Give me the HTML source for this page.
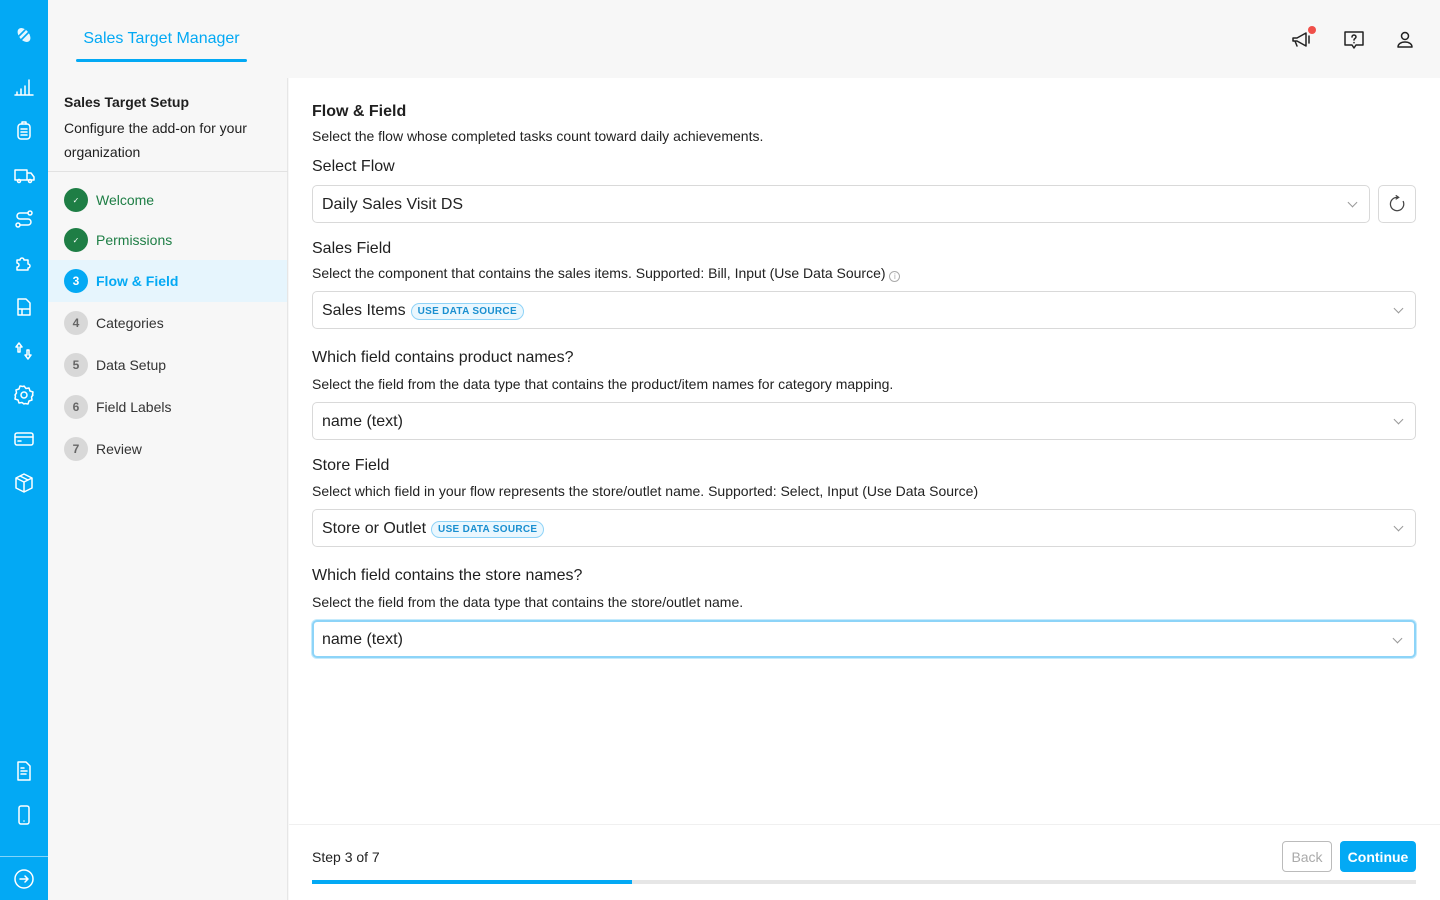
<!DOCTYPE html>
<html><head><meta charset="utf-8"><style>
*{box-sizing:border-box;margin:0;padding:0}
body{width:1440px;height:900px;overflow:hidden;font-family:"Liberation Sans",Arial,sans-serif;background:#f7f7f7;color:#1f1f1f;position:relative}
.rail{position:absolute;left:0;top:0;width:48px;height:900px;background:#03a9f4}
.rail svg{position:absolute;left:13px;width:22px;height:22px;fill:none;stroke:#fff;stroke-width:1.5;stroke-linecap:round;stroke-linejoin:round}
.top{position:absolute;left:48px;top:0;right:0;height:78px;background:#f7f7f7}
.tab{position:absolute;left:76px;top:30px;width:171px;text-align:center;color:#03a9f4;font-size:16px}
.tabline{position:absolute;left:76px;top:59px;width:171px;height:3px;background:#03a9f4;border-radius:2px}
.side{position:absolute;left:48px;top:78px;width:240px;height:822px;background:#f7f7f7;border-right:1px solid #e6e6e6}
.side h3{position:absolute;left:16px;top:16px;font-size:14px;font-weight:bold}
.side p{position:absolute;left:16px;top:38px;font-size:14px;line-height:24px;width:210px}
.side .div{position:absolute;left:0;top:93px;width:240px;height:1px;background:#e2e2e2}
.step{position:absolute;left:0;width:239px;height:42px;display:flex;align-items:center;padding-left:16px;font-size:14px;color:#333}
.step .c{width:24px;height:24px;border-radius:50%;background:#d8d8d8;color:#666;font-size:12px;font-weight:bold;display:flex;align-items:center;justify-content:center;margin-right:8px}
.step.done{color:#1e7e45}.step.done .c{background:#1e7e45;color:#fff;font-size:8px;font-weight:normal}
.step.act{background:#e6f5fd;color:#03a9f4;font-weight:bold}.step.act .c{background:#03a9f4;color:#fff}
.main{position:absolute;left:289px;top:78px;width:1151px;height:822px;background:#fff}
.t{position:absolute;left:312px;white-space:nowrap}
.h{font-size:16px;color:#1f1f1f}
.d{font-size:14px;color:#222}
.sel{position:absolute;left:312px;width:1104px;height:38px;border:1px solid #d9d9d9;border-radius:5px;background:#fff;font-size:16px;padding-left:9px;padding-top:2px;display:flex;align-items:center;color:#222}
.sel:after{content:"";position:absolute;right:13px;top:13px;width:6px;height:6px;border-right:1px solid #999;border-bottom:1px solid #999;transform:rotate(45deg)}
.badge{margin-left:5px;font-size:10px;font-weight:bold;color:#1a8fd0;border:1px solid #8fd3f7;background:#eaf7fe;border-radius:9px;padding:2px 6px;letter-spacing:.3px}
.ico{position:absolute;top:28px;width:24px;height:24px;fill:none;stroke:#222;stroke-width:1.5;stroke-linecap:round;stroke-linejoin:round}
</style></head><body>
<div class="rail">
<svg style="top:24px" viewBox="0 0 22 22"><ellipse cx="11" cy="11" rx="5" ry="8" transform="rotate(-40 11 11)" fill="#fff" stroke="none" opacity=".9"/><path d="M6 12l6-6M8 16l8-8" stroke="#03a9f4" stroke-width="1.6"/></svg>
<svg style="top:76px" viewBox="0 0 22 22"><path d="M2 19h18M4 19v-3M8 19v-6M12 19v-9M16 19V4"/></svg>
<svg style="top:120px" viewBox="0 0 22 22"><rect x="5" y="4" width="12" height="15" rx="3"/><path d="M8 9h6M8 12h6M8 15h6M9 4V2h4v2"/></svg>
<svg style="top:164px" viewBox="0 0 22 22"><path d="M2 6h12v10H2zM14 9h4l3 4v3h-7"/><circle cx="6" cy="17" r="1.5"/><circle cx="17" cy="17" r="1.5"/></svg>
<svg style="top:208px" viewBox="0 0 22 22"><circle cx="5" cy="17" r="2"/><circle cx="17" cy="5" r="2"/><path d="M7 17h8a3 3 0 000-6H7a3 3 0 010-6h8"/></svg>
<svg style="top:252px" viewBox="0 0 22 22"><path d="M4 8h3a2 2 0 114 0h4v4a2 2 0 110 4v2H4v-3a2 2 0 100-4z"/></svg>
<svg style="top:296px" viewBox="0 0 22 22"><path d="M5 3h8l4 4v12H5zM5 13h12M9 13v6"/></svg>
<svg style="top:340px" viewBox="0 0 22 22"><path d="M6 3L3 7h2v5h2V7h2zM15 19l3-4h-2v-5h-2v5h-2z"/></svg>
<svg style="top:384px" viewBox="0 0 22 22"><circle cx="11" cy="11" r="3"/><path d="M11 2l2 2.5 3-.5 1 3 3 1-.5 3L20 11l-1.5 2 .5 3-3 1-1 3-3-.5L11 20l-2-1.5-3 .5-1-3-3-1 .5-3L2 11l1.5-2-.5-3 3-1 1-3 3 .5z"/></svg>
<svg style="top:428px" viewBox="0 0 22 22"><rect x="2" y="5" width="18" height="12" rx="2"/><path d="M2 9h18M5 13h3"/></svg>
<svg style="top:472px" viewBox="0 0 22 22"><path d="M11 2l8 4v10l-8 4-8-4V6zM3 6l8 4 8-4M11 10v10M7 4l8 4"/></svg>
<svg style="top:760px" viewBox="0 0 22 22"><path d="M5 2h8l4 4v14H5zM8 11h6M8 14h5M8 8h3"/></svg>
<svg style="top:804px" viewBox="0 0 22 22"><rect x="6" y="2" width="10" height="18" rx="2"/><path d="M11 17h0"/></svg>
<div style="position:absolute;left:0;top:856px;width:48px;height:1px;background:rgba(255,255,255,.5)"></div>
<svg style="top:868px" viewBox="0 0 22 22"><circle cx="11" cy="11" r="9"/><path d="M7 11h8M12 8l3 3-3 3"/></svg>
</div>
<div class="top">
</div>
<div class="tab">Sales Target Manager</div><div class="tabline"></div>
<svg class="ico" style="left:1290px" viewBox="0 0 24 24"><path d="M3 10h4l9-5v13l-9-5H3zM5 13l2 5M19 8v7"/></svg>
<div style="position:absolute;left:1308px;top:26px;width:8px;height:8px;border-radius:50%;background:#f0504a"></div>
<svg class="ico" style="left:1342px" viewBox="0 0 24 24"><path d="M3 4h18v13h-7l-2 3-2-3H3z"/><path d="M10 9a2 2 0 114 0c0 1.5-2 1.5-2 3M12 14.5v.2"/></svg>
<svg class="ico" style="left:1393px" viewBox="0 0 24 24"><circle cx="12" cy="8" r="3.5"/><path d="M5 19c0-3 3-5 7-5s7 2 7 5z"/></svg>
<div class="side">
<h3>Sales Target Setup</h3>
<p>Configure the add-on for your organization</p>
<div class="div"></div>
<div class="step done" style="top:101px"><span class="c">✓</span>Welcome</div>
<div class="step done" style="top:141px"><span class="c">✓</span>Permissions</div>
<div class="step act" style="top:182px"><span class="c">3</span>Flow &amp; Field</div>
<div class="step" style="top:224px"><span class="c">4</span>Categories</div>
<div class="step" style="top:266px"><span class="c">5</span>Data Setup</div>
<div class="step" style="top:308px"><span class="c">6</span>Field Labels</div>
<div class="step" style="top:350px"><span class="c">7</span>Review</div>
</div>
<div class="main"></div>
<div class="t h" style="top:103px;font-weight:bold">Flow &amp; Field</div>
<div class="t d" style="top:128px">Select the flow whose completed tasks count toward daily achievements.</div>
<div class="t h" style="top:158px">Select Flow</div>
<div class="sel" style="top:185px;width:1058px">Daily Sales Visit DS</div>
<div style="position:absolute;left:1378px;top:185px;width:38px;height:38px;border:1px solid #d9d9d9;border-radius:5px"><svg viewBox="0 0 24 24" style="position:absolute;left:8px;top:8px;width:20px;height:20px;fill:none;stroke:#444;stroke-width:1.5;stroke-linecap:round"><path d="M13 4.1A8 8 0 1019.5 9"/><path d="M11 2l3 2-3 2" /></svg></div>
<div class="t h" style="top:240px">Sales Field</div>
<div class="t d" style="top:265px">Select the component that contains the sales items. Supported: Bill, Input (Use Data Source) <span style="display:inline-block;width:11px;height:11px;border:1px solid #aaa;border-radius:50%;font-size:8px;color:#aaa;text-align:center;line-height:10px;vertical-align:-1px">i</span></div>
<div class="sel" style="top:291px">Sales Items<span class="badge">USE DATA SOURCE</span></div>
<div class="t h" style="top:349px">Which field contains product names?</div>
<div class="t d" style="top:376px">Select the field from the data type that contains the product/item names for category mapping.</div>
<div class="sel" style="top:402px">name (text)</div>
<div class="t h" style="top:457px">Store Field</div>
<div class="t d" style="top:483px">Select which field in your flow represents the store/outlet name. Supported: Select, Input (Use Data Source)</div>
<div class="sel" style="top:509px">Store or Outlet<span class="badge">USE DATA SOURCE</span></div>
<div class="t h" style="top:567px">Which field contains the store names?</div>
<div class="t d" style="top:594px">Select the field from the data type that contains the store/outlet name.</div>
<div class="sel" style="top:620px;border:2px solid #8dd4f8;box-shadow:0 0 0 1px #c6ebfc;padding-left:8px">name (text)</div>
<div style="position:absolute;left:289px;top:824px;width:1151px;height:1px;background:#f0f0f0"></div>
<div class="t d" style="top:849px">Step 3 of 7</div>
<div style="position:absolute;left:312px;top:880px;width:1104px;height:4px;background:#e6e6e6"><div style="width:320px;height:4px;background:#03a9f4"></div></div>
<div style="position:absolute;left:1282px;top:841px;width:50px;height:31px;border:1px solid #bbb;border-radius:4px;color:#aaa;font-size:14px;text-align:center;line-height:31px">Back</div>
<div style="position:absolute;left:1340px;top:841px;width:76px;height:31px;background:#03a9f4;border-radius:4px;color:#fff;font-size:14px;font-weight:bold;text-align:center;line-height:32px">Continue</div>
</body></html>
